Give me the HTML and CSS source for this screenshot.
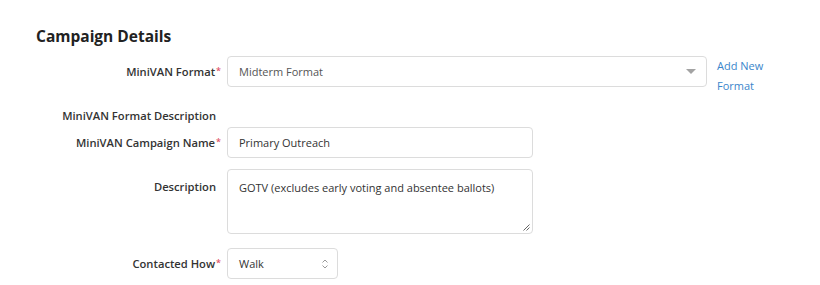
FILE: index.html
```html
<!DOCTYPE html>
<html>
<head>
<meta charset="utf-8">
<link rel="stylesheet" href="styles.css">
</head>
<body>
<div class="page">
  <h2 class="title">Campaign Details</h2>
  <div class="form">
    <div class="row row-format">
      <label class="lbl">MiniVAN Format<span class="req">*</span></label>
      <div class="ctl ctl-format">
        <div class="select select-wide">
          <span class="val muted">Midterm Format</span>
          <svg class="caret" width="10" height="5" viewBox="0 0 10 5"><path d="M0 0H10L5 5Z" fill="#a3a3a3"/></svg>
        </div>
        <a class="link" href="#">Add New Format</a>
      </div>
    </div>
    <div class="row row-desc-label">
      <label class="lbl lbl-plain">MiniVAN Format Description</label>
    </div>
    <div class="row row-name">
      <label class="lbl">MiniVAN Campaign Name<span class="req">*</span></label>
      <div class="ctl">
        <div class="input input-mid"><span class="val">Primary Outreach</span></div>
      </div>
    </div>
    <div class="row row-text">
      <label class="lbl lbl-text">Description</label>
      <div class="ctl">
        <div class="textarea input-mid">
          <span class="val">GOTV (excludes early voting and absentee ballots)</span>
          <svg class="grip" width="8" height="8" viewBox="0 0 8 8"><path d="M7.5 1.5L1.5 7.5M7.5 4.5L4.5 7.5" stroke="#666" stroke-width="1"/></svg>
        </div>
      </div>
    </div>
    <div class="row row-how">
      <label class="lbl">Contacted How<span class="req">*</span></label>
      <div class="ctl">
        <div class="select select-small">
          <span class="val">Walk</span>
          <svg class="updown" width="8" height="12" viewBox="0 0 8 12"><path d="M1.5 4.5L4 2L6.5 4.5M1.5 7.5L4 10L6.5 7.5" fill="none" stroke="#9a9a9a" stroke-width="1"/></svg>
        </div>
      </div>
    </div>
  </div>
</div>
</body>
</html>
```

FILE: styles.css
```css
* { box-sizing: border-box; }
html, body { margin: 0; padding: 0; background: #fff; }
body {
  font-family: "Open Sans", "Noto Sans", sans-serif;
  color: #333;
  width: 820px;
  height: 285px;
  overflow: hidden;
}
.page { padding: 24px 0 0 0; }
.title {
  margin: 0 0 0 36px;
  font-size: 15.5px;
  font-weight: 700;
  line-height: 24px;
  color: #222;
}
.form { margin-top: 8px; }
.row {
  display: grid;
  grid-template-columns: 221px auto;
  column-gap: 6px;
  align-items: start;
}
.lbl {
  text-align: right;
  font-size: 11.2px;
  font-weight: 600;
  line-height: 17px;
  padding-top: 7px;
  color: #333;
  white-space: nowrap;
}
.lbl-plain { padding-right: 5px; padding-top: 0; }
.lbl-text { padding-top: 9px; padding-right: 5px; }
.req { color: #e0556a; font-size: 9px; vertical-align: top; position: relative; top: -1px; margin-left: 1px; }
.ctl { display: flex; align-items: flex-start; }
.ctl-format { gap: 10px; }
.select, .input, .textarea {
  border: 1px solid #dcdcdc;
  border-radius: 4px;
  height: 31px;
  display: flex;
  align-items: center;
  padding: 0 11px;
  font-size: 11px;
  color: #333;
  background: #fff;
  position: relative;
}
.select-wide { width: 480px; justify-content: space-between; padding-right: 10px; }
.muted { color: #555; }
.caret { margin-right: 0; }
.link {
  color: #3a86cb;
  text-decoration: none;
  font-size: 11px;
  line-height: 20px;
  width: 60px;
  margin-top: 0;
}
.row-desc-label { margin-top: 11px; }
.row-name { margin-top: 3px; }
.input-mid { width: 306px; }
.row-text { margin-top: 11px; }
.textarea {
  height: 65px;
  align-items: flex-start;
  padding-top: 10px;
}
.grip { position: absolute; right: 2px; bottom: 2px; }
.row-how { margin-top: 14px; }
.select-small { width: 111px; justify-content: space-between; padding-right: 8px; }
```
